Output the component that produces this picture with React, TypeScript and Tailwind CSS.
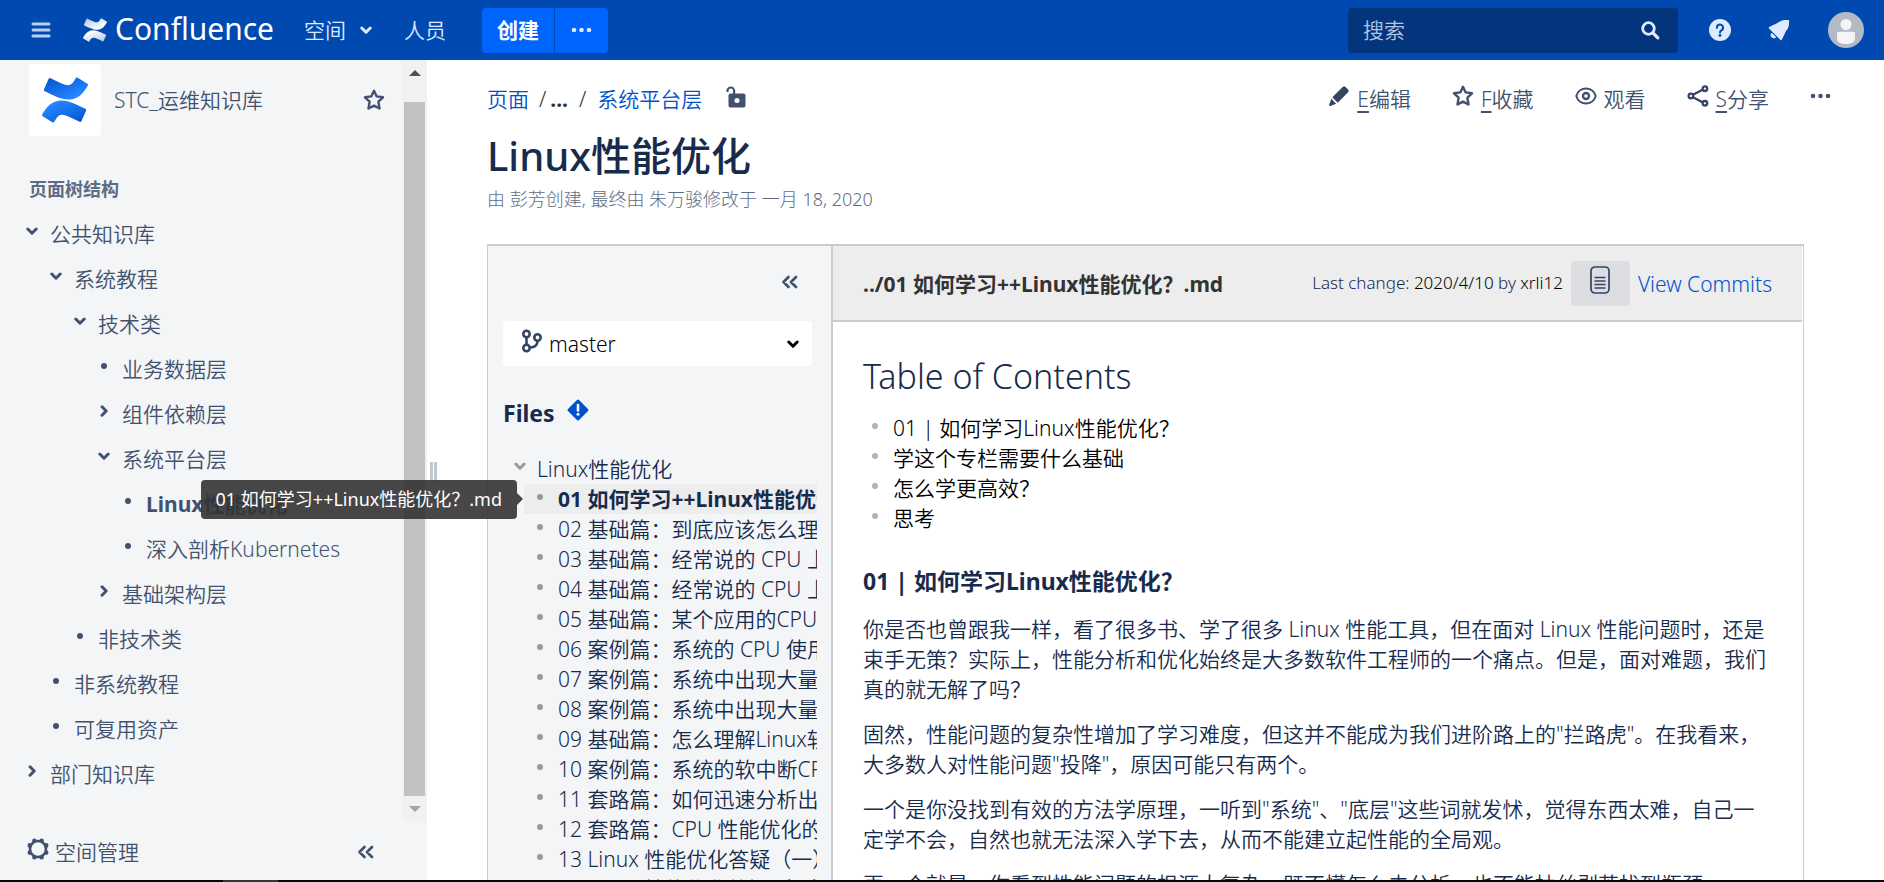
import { useState, type ReactNode } from "react";

const FONT = "font-['Noto_Sans','Noto_Sans_CJK_SC',sans-serif]";

type Marker = "open" | "closed" | "leaf";

const INDENT = ["pl-0", "pl-6", "pl-12", "pl-18", "pl-24"];

const PAGES: { depth: number; marker: Marker; label: string; current?: boolean }[] = [
  { depth: 0, marker: "open", label: "公共知识库" },
  { depth: 1, marker: "open", label: "系统教程" },
  { depth: 2, marker: "open", label: "技术类" },
  { depth: 3, marker: "leaf", label: "业务数据层" },
  { depth: 3, marker: "closed", label: "组件依赖层" },
  { depth: 3, marker: "open", label: "系统平台层" },
  { depth: 4, marker: "leaf", label: "Linux性能优化", current: true },
  { depth: 4, marker: "leaf", label: "深入剖析Kubernetes" },
  { depth: 3, marker: "closed", label: "基础架构层" },
  { depth: 2, marker: "leaf", label: "非技术类" },
  { depth: 1, marker: "leaf", label: "非系统教程" },
  { depth: 1, marker: "leaf", label: "可复用资产" },
  { depth: 0, marker: "closed", label: "部门知识库" },
];

const FILES = [
  "01 如何学习++Linux性能优化？.md",
  "02 基础篇：到底应该怎么理解平均负载.md",
  "03 基础篇：经常说的 CPU 上下文切换（上）.md",
  "04 基础篇：经常说的 CPU 上下文切换（下）.md",
  "05 基础篇：某个应用的CPU使用率达到100%.md",
  "06 案例篇：系统的 CPU 使用率很高.md",
  "07 案例篇：系统中出现大量不可中断进程（上）.md",
  "08 案例篇：系统中出现大量不可中断进程（下）.md",
  "09 基础篇：怎么理解Linux软中断.md",
  "10 案例篇：系统的软中断CPU使用率升高.md",
  "11 套路篇：如何迅速分析出系统瓶颈.md",
  "12 套路篇：CPU 性能优化的几个思路.md",
  "13 Linux 性能优化答疑（一）.md",
  "14 Linux 性能优化答疑（二）.md",
];

const TOC = ["01 | 如何学习Linux性能优化？", "学这个专栏需要什么基础", "怎么学更高效？", "思考"];

function Chevron({ dir = "down", className = "" }: { dir?: "down" | "right"; className?: string }) {
  return (
    <svg viewBox="0 0 12 12" className={`size-3 shrink-0 ${className}`} fill="none" stroke="currentColor" strokeWidth="3" strokeLinecap="round" strokeLinejoin="round" aria-hidden="true">
      <path d={dir === "down" ? "M1.8 4 6 8.200 10.200 4" : "M4 1.800 8.200 6 4 10.200"} />
    </svg>
  );
}

function Bullet({ className = "" }: { className?: string }) {
  return <span className={`size-1.5 shrink-0 rounded-full ${className}`} />;
}

function DoubleLeft({ className = "" }: { className?: string }) {
  return (
    <svg viewBox="0 0 18 14" className={`h-3.5 w-4.5 ${className}`} fill="none" stroke="currentColor" strokeWidth="2.700" strokeLinecap="round" strokeLinejoin="round" aria-hidden="true">
      <path d="M7.500 2 2.500 7l5 5M15 2l-5 5 5 5" />
    </svg>
  );
}

function Dots({ className = "" }: { className?: string }) {
  return (
    <svg viewBox="0 0 21 6" className={`h-1.5 w-5.25 ${className}`} fill="currentColor" aria-hidden="true">
      <circle cx="3" cy="3" r="2.300" />
      <circle cx="10.500" cy="3" r="2.300" />
      <circle cx="18" cy="3" r="2.300" />
    </svg>
  );
}

function Star() {
  return (
    <svg viewBox="0 0 22 22" className="size-5.5 shrink-0" fill="none" stroke="currentColor" strokeWidth="2.400" strokeLinejoin="round" aria-hidden="true">
      <path d="M11 1.800 13.700 7.400 20 8.300 15.400 12.700l1.100 6.800L11 16.600 5.500 19.500l1.100-6.800L2 8.300l6.300-.9z" />
    </svg>
  );
}

function LogoMark({ id, from, to, className }: { id: string; from: string; to: string; className: string }) {
  return (
    <svg viewBox="0 0 24 24" className={className} aria-hidden="true">
      <defs>
        <linearGradient id={`${id}-a`} x1="0" y1="0" x2=".75" y2=".8">
          <stop offset="0" stopColor={from} />
          <stop offset="1" stopColor={to} />
        </linearGradient>
        <linearGradient id={`${id}-b`} x1="1" y1="1" x2=".25" y2=".2">
          <stop offset="0" stopColor={from} />
          <stop offset="1" stopColor={to} />
        </linearGradient>
      </defs>
      <path
        fill={`url(#${id}-b)`}
        d="M.87 18.257c-.248.382-.53.875-.763 1.245a.764.764 0 0 0 .255 1.040l4.965 3.054a.764.764 0 0 0 1.058-.26c.199-.332.454-.763.733-1.221 1.967-3.247 3.945-2.853 7.508-1.146l4.957 2.337a.764.764 0 0 0 1.028-.382l2.364-5.346a.764.764 0 0 0-.382-1 599.851 599.851 0 0 1-4.965-2.361C10.911 10.970 5.224 11.185.87 18.257z"
      />
      <path
        fill={`url(#${id}-a)`}
        d="M23.131 5.743c.249-.405.531-.875.764-1.250a.764.764 0 0 0-.256-1.034L18.675.404a.764.764 0 0 0-1.058.26c-.195.335-.451.763-.734 1.225-1.966 3.246-3.945 2.850-7.508 1.146L4.437.694a.764.764 0 0 0-1.027.382L1.046 6.422a.764.764 0 0 0 .382 1c1.039.49 3.105 1.467 4.965 2.361 6.698 3.246 12.392 3.029 16.738-4.040z"
      />
    </svg>
  );
}

function TopBar() {
  return (
    <header className="flex h-15 shrink-0 items-center bg-[#0049b0] pr-5 pl-[31px] text-[#deebff]">
      <button type="button" aria-label="菜单" className="mr-8">
        <svg viewBox="0 0 20 16" className="h-4 w-5" fill="none" stroke="#b9cff0" strokeWidth="3" strokeLinecap="round" aria-hidden="true">
          <path d="M2 2h16M2 8h16M2 14h16" />
        </svg>
      </button>
      <a href="#home" className="flex items-center gap-2 text-white">
        <LogoMark id="bar" from="#a9c4ec" to="#ffffff" className="size-6" />
        <span className="pb-0.5 text-[30px] leading-10 font-normal">Confluence</span>
      </a>
      <a href="#spaces" className="ml-[30px] flex items-center gap-3.5">
        空间
        <Chevron />
      </a>
      <a href="#people" className="ml-8">
        人员
      </a>
      <div className="ml-9 flex h-[45px] gap-px overflow-hidden rounded">
        <button type="button" className="bg-[#0065ff] px-[15px] font-bold text-white">
          创建
        </button>
        <button type="button" aria-label="更多" className="bg-[#0065ff] px-4">
          <Dots />
        </button>
      </div>
      <form role="search" className="ml-auto flex h-[45px] w-[330px] items-center rounded bg-[#04347c] pr-4.5 pl-[15px]">
        <input type="search" aria-label="搜索" placeholder="搜索" className="min-w-0 flex-1 bg-transparent outline-none placeholder:text-[#b3c6e6]" />
        <button type="button" aria-label="搜索">
          <svg viewBox="0 0 20 20" className="size-5" fill="none" stroke="currentColor" strokeLinecap="round" aria-hidden="true">
            <circle cx="8.500" cy="8.500" r="5.800" strokeWidth="2.800" />
            <path d="m13.500 13.500 4.300 4.300" strokeWidth="3.200" />
          </svg>
        </button>
      </form>
      <button type="button" aria-label="帮助" className="ml-[31px]">
        <svg viewBox="0 0 22 22" className="size-5.5" aria-hidden="true">
          <circle cx="11" cy="11" r="11" fill="#deebff" />
          <path d="M7.900 8.700a3.100 3.100 0 1 1 4.800 2.500c-1.100.7-1.700 1.200-1.700 2.300" fill="none" stroke="#0049b0" strokeWidth="2.100" strokeLinecap="round" />
          <circle cx="11" cy="16.500" r="1.400" fill="#0049b0" />
        </svg>
      </button>
      <button type="button" aria-label="通知" className="ml-[37px]">
        <svg viewBox="0 0 22 22" className="size-5.5" fill="#deebff" aria-hidden="true">
          <path d="M19.800.9c.9 0 1.300.5 1.300 1.300.1 4-.5 7.300-3.300 10.200l-4 8.300c-.3.700-.8.700-1.300.2L1 9.400c-.5-.5-.4-1 .2-1.300l8.300-4C12.400 1.300 15.800.8 19.800.9z" />
          <path d="M3.700 13.700a2.800 2.800 0 1 0 4.600 4.600z" />
        </svg>
      </button>
      <button type="button" aria-label="用户" className="ml-[38px]">
        <svg viewBox="0 0 36 36" className="size-9" aria-hidden="true">
          <circle cx="18" cy="18" r="18" fill="#b3bac5" />
          <circle cx="18" cy="12.500" r="5.500" fill="#f4f5f7" />
          <path d="M9 21.500a1.700 1.700 0 0 1 1.700-1.700h14.600a1.700 1.700 0 0 1 1.700 1.700V27c0 3-4 5-9 5s-9-2-9-5z" fill="#f4f5f7" />
        </svg>
      </button>
    </header>
  );
}

function Sidebar() {
  return (
    <aside className="flex w-[427px] shrink-0 flex-col bg-[#f4f5f7] text-[#42526e]">
      <div className="flex min-h-0 flex-1">
        <div className="min-w-0 flex-1 overflow-hidden pt-1">
          <div className="flex items-center pr-[17px] pl-[29px]">
            <a href="#space" className="flex items-center gap-[13px]">
              <span className="flex size-18 items-center justify-center rounded bg-white">
                <LogoMark id="space" from="#0052cc" to="#2684ff" className="size-11.5" />
              </span>
              STC_运维知识库
            </a>
            <button type="button" aria-label="收藏空间" className="ml-auto">
              <Star />
            </button>
          </div>
          <h2 className="mt-10 pl-[29px] text-[18px] leading-[27px] font-bold text-[#5e6c84]">页面树结构</h2>
          <ul className="mt-2 pl-[26px]">
            {PAGES.map((p) => (
              <li key={p.label} className={INDENT[p.depth]}>
                <a href="#page" className={`flex h-[45px] items-center gap-3 whitespace-nowrap ${p.current ? "font-bold" : ""}`}>
                  <span className="mb-1.5 flex w-3 justify-center">
                    {p.marker === "leaf" ? <Bullet className="bg-[#42526e]" /> : <Chevron dir={p.marker === "open" ? "down" : "right"} />}
                  </span>
                  {p.label}
                </a>
              </li>
            ))}
          </ul>
        </div>
        <div className="flex w-[25px] shrink-0 flex-col items-center bg-[#f1f1f1]" aria-hidden="true">
          <div className="flex h-[42px] w-full justify-center pt-2.5">
            <svg viewBox="0 0 12 6" className="h-1.5 w-3 fill-[#505050]"><path d="M0 6 6 0l6 6z" /></svg>
          </div>
          <div className="w-[21px] flex-1 bg-[#c1c1c1]" />
          <div className="flex h-[25px] items-center">
            <svg viewBox="0 0 12 6" className="h-1.5 w-3 fill-[#a3a3a3]"><path d="M0 0h12L6 6z" /></svg>
          </div>
        </div>
      </div>
      <div className="flex h-[59px] shrink-0 items-center bg-[#f4f5f7] pt-0.5 pr-[52px] pl-[27px]">
        <button type="button" className="flex items-center gap-1.5">
          <svg viewBox="0 0 22 22" className="mb-1.5 size-5.5" aria-hidden="true">
            <g stroke="currentColor" strokeWidth="4.600" strokeLinecap="round">
              <path d="M7.400 2.800v0M14.600 2.800v0M19.200 7.400v0M19.200 14.600v0M14.600 19.200v0M7.400 19.200v0M2.800 14.600v0M2.800 7.400v0" />
            </g>
            <circle cx="11" cy="11" r="8" fill="#f4f5f7" stroke="currentColor" strokeWidth="2.600" />
          </svg>
          空间管理
        </button>
        <button type="button" aria-label="收起侧边栏" className="ml-auto">
          <DoubleLeft />
        </button>
      </div>
    </aside>
  );
}

function Action({ icon, hotkey, label }: { icon: ReactNode; hotkey?: string; label: string }) {
  return (
    <button type="button" className="flex items-center gap-[7px] whitespace-nowrap">
      <span className="mb-1.5">{icon}</span>
      <span>
        {hotkey && <u className="underline-offset-4">{hotkey}</u>}
        {label}
      </span>
    </button>
  );
}

function PageHeader() {
  return (
    <div className="pl-15">
      <div className="flex h-[73px] items-start justify-between pr-[53px] pt-[23px] leading-8">
        <nav className="flex items-center text-[#0052cc]">
          <a href="#pages">页面</a>
          <span className="ml-2.5 text-[#333]">/</span>
          <button type="button" aria-label="展开路径" className="ml-1 font-bold text-[#333]">...</button>
          <span className="mx-[11px] text-[#333]">/</span>
          <a href="#platform">系统平台层</a>
          <svg viewBox="0 0 20 22" className="mb-1 ml-6 h-5.5 w-5" aria-hidden="true">
            <path d="M1.500 6V4.800a3.300 3.300 0 0 1 6.600 0V8" fill="none" stroke="#42526e" strokeWidth="2.200" />
            <rect x="2.500" y="7.500" width="17" height="14" rx="2" fill="#42526e" />
            <circle cx="11" cy="14.500" r="2.500" fill="#fff" />
          </svg>
        </nav>
        <div className="flex items-center gap-[41px] text-[#42526e]">
          <Action
            hotkey="E"
            label="编辑"
            icon={
              <svg viewBox="0 0 22 22" className="size-5.5" fill="#344563" aria-hidden="true">
                <path d="M4.300 12.300 14.700 1.900a2 2 0 0 1 2.800 0l2.600 2.600a2 2 0 0 1 0 2.800L9.700 17.700zM3.300 13.800l4.900 4.900-5.800 2.200c-.9.300-1.500-.2-1.200-1.200z" />
              </svg>
            }
          />
          <Action hotkey="F" label="收藏" icon={<Star />} />
          <Action
            label="观看"
            icon={
              <svg viewBox="0 0 22 22" className="size-5.5" fill="none" stroke="currentColor" aria-hidden="true">
                <path d="M1.300 11C2.500 6.600 6.400 3.600 11 3.600s8.500 3 9.700 7.400c-1.200 4.400-5.100 7.400-9.700 7.400S2.500 15.400 1.300 11z" strokeWidth="2" />
                <circle cx="11" cy="11" r="3" strokeWidth="2.400" />
              </svg>
            }
          />
          <Action
            hotkey="S"
            label="分享"
            icon={
              <svg viewBox="0 0 22 22" className="size-5.5" fill="none" stroke="#344563" strokeWidth="2.300" aria-hidden="true">
                <path d="m6 9.700 9.500-5M6 12.300l9.500 5" />
                <circle cx="3.900" cy="11" r="2.300" />
                <circle cx="17.900" cy="3.700" r="2.300" />
                <circle cx="17.900" cy="18.300" r="2.300" />
              </svg>
            }
          />
          <button type="button" aria-label="更多操作">
            <Dots className="mb-1.5" />
          </button>
        </div>
      </div>
      <h1 className="text-[40px] leading-[45px] font-medium text-[#172b4d]">Linux性能优化</h1>
      <p className="mt-2 text-[18px] leading-[27px] font-light text-[#5e6c84]">由 彭芳创建, 最终由 朱万骏修改于 一月 18, 2020</p>
    </div>
  );
}

function FilePanel() {
  const [branch, setBranch] = useState("master");
  return (
    <section className="flex w-[345px] shrink-0 flex-col border-r-2 border-[#ccc] bg-[#f4f5f7] text-[#172b4d]">
      <div className="flex h-[75px] shrink-0 items-center justify-end pr-8 pb-1">
        <button type="button" aria-label="收起文件树" className="text-[#42526e]">
          <DoubleLeft />
        </button>
      </div>
      <label className="mr-[19px] ml-[15px] flex h-[45px] shrink-0 items-center rounded bg-white pr-[13px] pl-[18px] text-black">
        <svg viewBox="0 0 22 24" className="mb-1.5 h-6 w-5.5 shrink-0" fill="none" stroke="#344563" strokeWidth="2.600" aria-label="分支">
          <circle cx="5.500" cy="5" r="3.200" />
          <circle cx="5.500" cy="19" r="3.200" />
          <circle cx="16.500" cy="8.500" r="3.200" />
          <path d="M5.500 8.200v7.600M16.500 11.700c0 5-2.500 6.500-7.800 6.800" />
        </svg>
        <select value={branch} onChange={(e) => setBranch(e.target.value)} className="ml-1.5 min-w-0 flex-1 appearance-none bg-transparent outline-none">
          <option>master</option>
        </select>
        <Chevron />
      </label>
      <h2 className="mt-[29px] flex shrink-0 items-center gap-3 pl-[15px] text-[23px] leading-9 font-bold">
        Files
        <svg viewBox="0 0 22 22" className="mb-1.5 size-5.5" aria-hidden="true">
          <rect x="3.200" y="3.200" width="15.600" height="15.600" rx="1.500" transform="rotate(45 11 11)" fill="#0052cc" />
          <path d="M11 6v5.500" stroke="#fff" strokeWidth="2.600" strokeLinecap="round" />
          <circle cx="11" cy="15.300" r="1.500" fill="#fff" />
        </svg>
      </h2>
      <div className="mt-[23px] flex h-[30px] shrink-0 items-center gap-[11px] pl-[26px]">
        <Chevron className="mb-1.5 text-[#999]" />
        Linux性能优化
      </div>
      <ul className="mr-3.5 ml-9">
        {FILES.map((name, i) => (
          <li key={name} className={`relative flex h-[30px] items-center gap-[15px] pl-[13px] ${i === 0 ? "bg-[#ededed] font-bold" : ""}`}>
            <Bullet className="mb-1 bg-[#999]" />
            <a href="#file" className="min-w-0 flex-1 overflow-hidden leading-[30px] whitespace-nowrap">
              {name}
            </a>
            {i === 0 && (
              <span role="tooltip" className="absolute right-full z-10 mr-[7px] rounded bg-[#333]/90 px-[15px] py-1.5 text-[18px] leading-[27px] font-normal whitespace-nowrap text-white">
                {name}
                <span className="absolute top-1/2 left-full -mt-1.5 border-y-6 border-l-6 border-y-transparent border-l-[#333]/90" />
              </span>
            )}
          </li>
        ))}
      </ul>
    </section>
  );
}

function Document() {
  return (
    <article className="min-w-0 flex-1 text-[#172b4d]">
      <div className="mr-px flex h-19 items-center border-b-2 border-[#ccc] bg-[#ededed] pr-[30px] pl-7.5 whitespace-nowrap">
        <h2 className="pt-0.5 font-bold text-[#333]">../01 如何学习++Linux性能优化？.md</h2>
        <p className="ml-auto text-[17px]">
          Last change: <span className="text-black">2020/4/10</span> by <span className="text-black">xrli12</span>
        </p>
        <button type="button" aria-label="查看源文件" className="ml-2 flex h-[45px] w-[59px] items-center justify-center rounded bg-[#dcdde1] pb-1.5">
          <svg viewBox="0 0 20 28" className="h-7 w-5" fill="none" stroke="#344563" aria-hidden="true">
            <rect x="1" y="1" width="18" height="26" rx="4" strokeWidth="1.700" />
            <path d="M4.500 11.500h11M4.500 15h11M4.500 18.500h11M4.500 22h11" strokeWidth="1.500" />
          </svg>
        </button>
        <a href="#commits" className="ml-2 pt-0.5 text-[#0052cc]">
          View Commits
        </a>
      </div>
      <div className="px-7.5 pt-8">
        <h1 className="text-[34px] leading-[45px]">Table of Contents</h1>
        <ul className="mt-3.5 text-black">
          {TOC.map((t) => (
            <li key={t} className="flex h-[30px] items-center gap-[15px] pl-[9px]">
              <Bullet className="mb-1 bg-[#b3b3b3]" />
              {t}
            </li>
          ))}
        </ul>
        <h2 className="mt-[30px] text-[23px] leading-9 font-bold">01 | 如何学习Linux性能优化？</h2>
        <div className="mt-[15px] flex flex-col gap-[15px] leading-[30px]">
          <p>你是否也曾跟我一样，看了很多书、学了很多 Linux 性能工具，但在面对 Linux 性能问题时，还是束手无策？实际上，性能分析和优化始终是大多数软件工程师的一个痛点。但是，面对难题，我们真的就无解了吗？</p>
          <p>固然，性能问题的复杂性增加了学习难度，但这并不能成为我们进阶路上的"拦路虎"。在我看来，大多数人对性能问题"投降"，原因可能只有两个。</p>
          <p>一个是你没找到有效的方法学原理，一听到"系统"、"底层"这些词就发怵，觉得东西太难，自己一定学不会，自然也就无法深入学下去，从而不能建立起性能的全局观。</p>
          <p>再一个就是，你看到性能问题的根源太复杂，既不懂怎么去分析，也不能抽丝剥茧找到瓶颈。</p>
        </div>
      </div>
    </article>
  );
}

export default function App() {
  return (
    <div lang="zh-CN" className={`${FONT} flex h-screen flex-col overflow-hidden bg-white text-[21px] leading-[30px] font-[350]`}>
      <TopBar />
      <div className="flex min-h-0 flex-1">
        <Sidebar />
        <main className="flex min-w-0 flex-1 flex-col">
          <PageHeader />
          <div className="flex min-h-0 flex-1">
            <div className="flex w-15 shrink-0 items-start gap-px pt-[249px] pl-[3px]" aria-hidden="true">
              <span className="h-5 w-[3px] bg-[#c1c7d0]" />
              <span className="h-5 w-[3px] bg-[#c1c7d0]" />
            </div>
            <div className="mt-[31px] mr-20 flex min-w-0 flex-1 border-x border-t-2 border-[#ccc]">
              <FilePanel />
              <Document />
            </div>
          </div>
        </main>
      </div>
      <div className="relative z-20 h-0.5 shrink-0 bg-[#02050c]" aria-hidden="true">
        <div className="ml-[223px] h-full w-[55px] bg-[#33383f]" />
      </div>
    </div>
  );
}
